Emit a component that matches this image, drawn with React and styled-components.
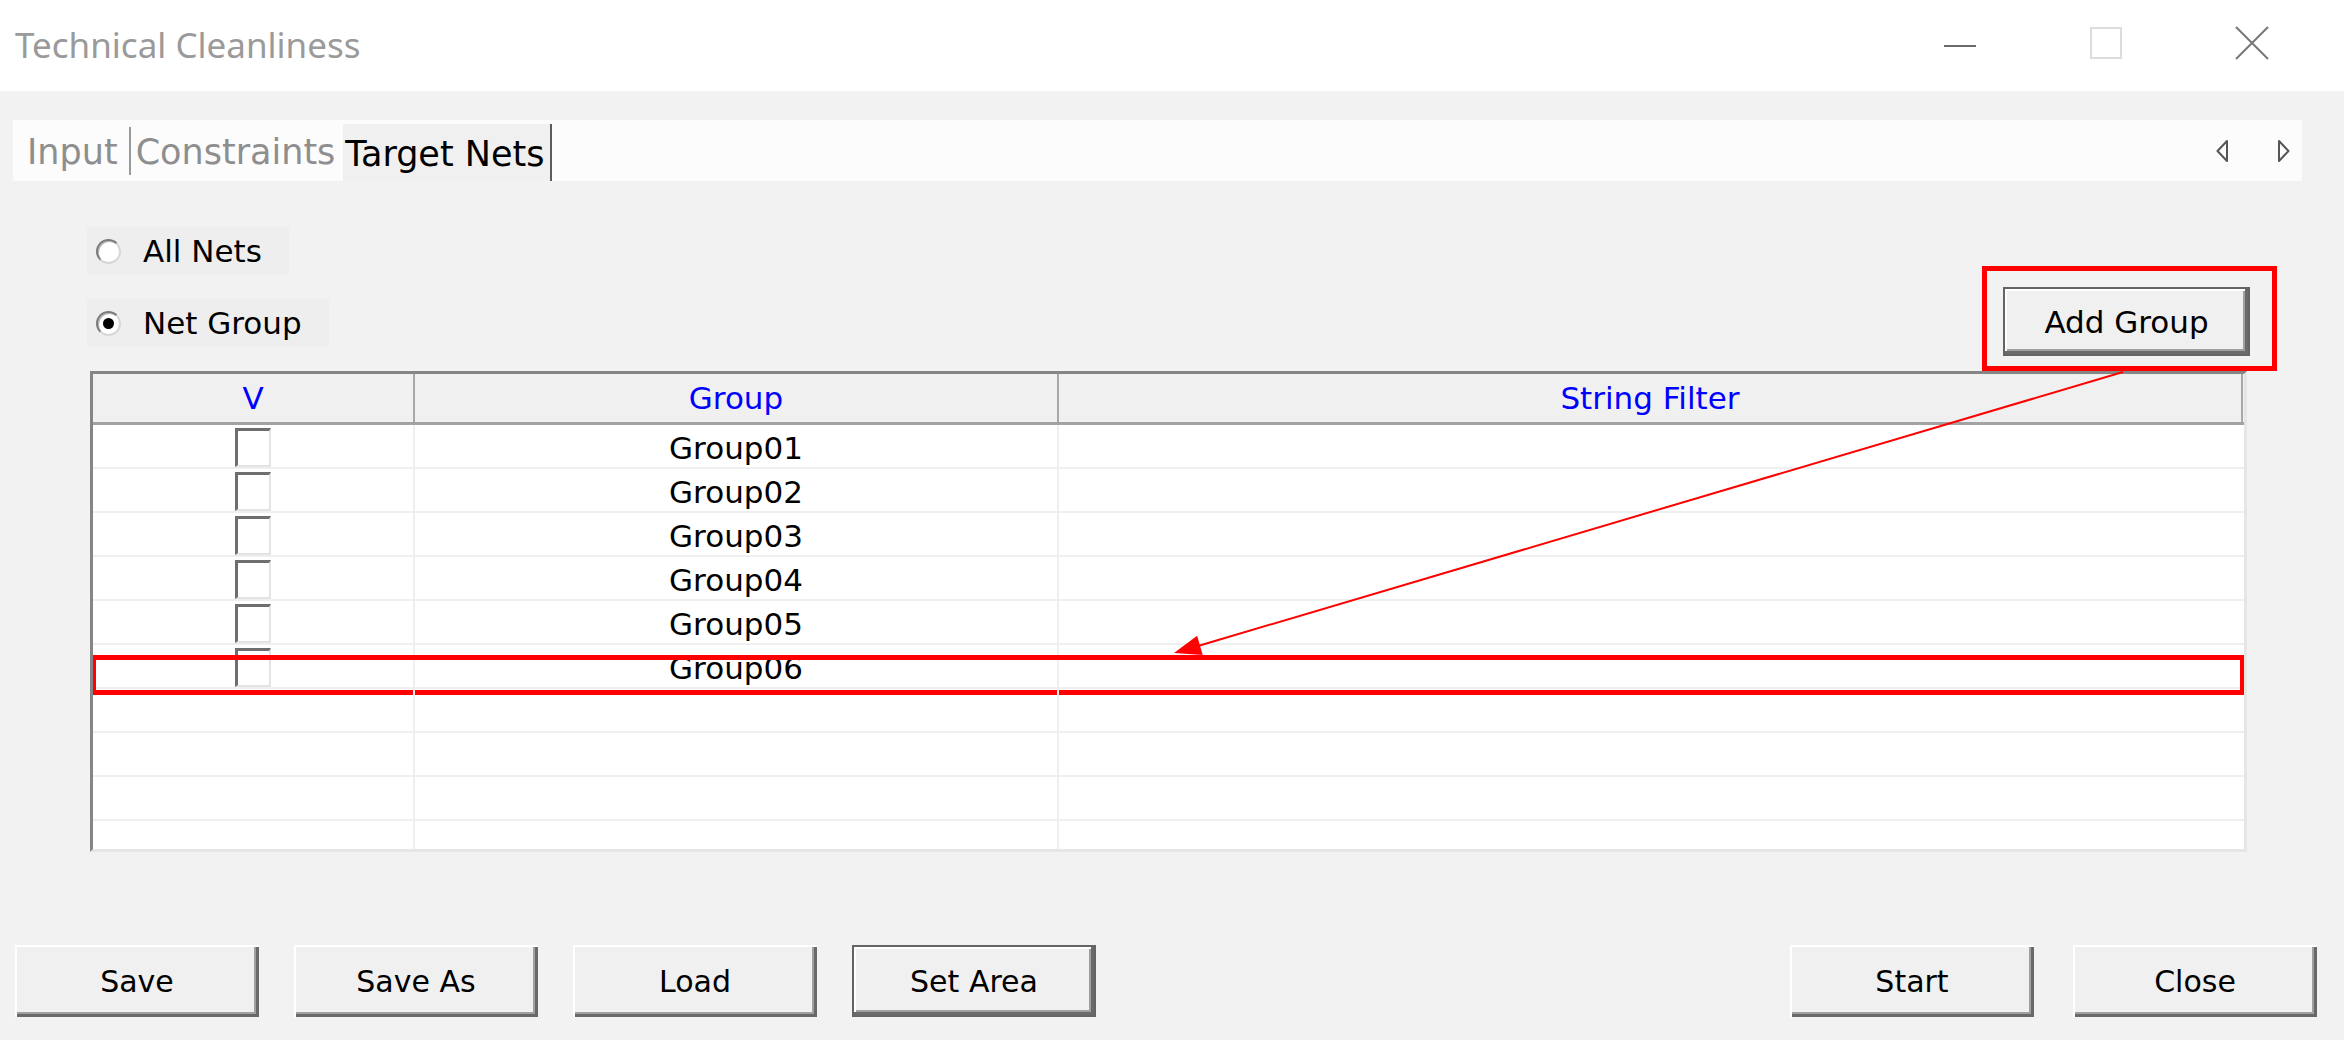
import React from 'react'
import styled, { createGlobalStyle, css } from 'styled-components'

const GlobalStyle = createGlobalStyle`
  html, body {
    margin: 0;
    padding: 0;
    background: #f2f2f2;
  }
  body {
    font-family: "DejaVu Sans", "Liberation Sans", sans-serif;
  }
  * {
    box-sizing: border-box;
  }
`;

const Window = styled.div`
  position: relative;
  width: 2344px;
  height: 1040px;
  display: flex;
  flex-direction: column;
  background: #f2f2f2;
  overflow: hidden;
`;

const TitleBar = styled.div`
  height: 91px;
  flex: none;
  display: flex;
  align-items: center;
  padding-left: 15px;
  background: #ffffff;
`;

const Title = styled.div`
  flex: 1;
  font-family: "Noto Sans", "Open Sans", sans-serif;
  font-size: 35px;
  color: #9a9a9a;
  margin-top: -2px;
`;

const Caption = styled.div`
  display: flex;
  align-self: stretch;
  padding-right: 19px;
`;

const CaptionButton = styled.div`
  width: 146px;
  display: flex;
  align-items: center;
  justify-content: center;
  padding-bottom: ${({ $pb }) => $pb ?? 5}px;
`;

const Body = styled.div`
  display: flex;
  flex-direction: column;
  padding: 29px 42px 0 13px;
`;

const TabStrip = styled.div`
  height: 61px;
  display: flex;
  align-items: stretch;
  background: #fcfcfc;
`;

const Tab = styled.div`
  display: flex;
  align-items: center;
  font-size: 35px;
  color: #8e8e8e;
  padding: ${({ $pad }) => $pad};
  ${({ $active }) => $active && css`
    align-self: flex-end;
    height: 57px;
    color: #000000;
    background: #f0f0f0;
  `}
`;

const TabDivider = styled.div`
  width: 2px;
  height: ${({ $h }) => $h}px;
  background: ${({ $c }) => $c};
  align-self: ${({ $self }) => $self || 'center'};
`;

const TabArrows = styled.div`
  margin-left: auto;
  display: flex;
  align-items: center;
  gap: 50px;
  padding-right: 12px;
`;

const Content = styled.div`
  display: flex;
  flex-direction: column;
  padding: 0 25px 0 74px;
`;

const OptionsRow = styled.div`
  margin-top: 46px;
  display: flex;
  justify-content: space-between;
  align-items: flex-end;
`;

const RadioColumn = styled.div`
  display: flex;
  flex-direction: column;
  align-items: flex-start;
  gap: 24px;
  margin-bottom: 24px;
`;

const RadioItem = styled.label`
  height: 48px;
  display: flex;
  align-items: center;
  gap: 22px;
  padding: 0 27px 0 9px;
  background: #eeeeee;
  font-size: 31px;
  color: #000000;
`;

const RadioCircle = styled.span`
  width: 25px;
  height: 25px;
  border-radius: 50%;
  display: flex;
  align-items: center;
  justify-content: center;
  background: #ffffff;
  border: 2px solid;
  border-color: #7a7a7a #d6d6d6 #d6d6d6 #7a7a7a;
  box-shadow: inset 1px 1px 0 #b5b5b5;
  ${({ $checked }) => $checked && css`
    &::after {
      content: '';
      width: 11px;
      height: 11px;
      border-radius: 50%;
      background: #000000;
    }
  `}
`;

const MarkFrame = styled.div`
  border: 5px solid #ff0000;
  padding: 16px 22px 10px 16px;
`;

const WinButton = styled.button`
  width: ${({ $w }) => $w || 244}px;
  height: ${({ $h }) => $h || 72}px;
  border: none;
  margin: 0;
  padding: 0;
  background: #f0f0f0;
  font-family: "DejaVu Sans", "Liberation Sans", sans-serif;
  font-size: ${({ $fs }) => $fs || 30}px;
  color: #000000;
  box-shadow: inset 2px 2px 0 #ffffff, inset -3px -3px 0 #696969, inset -5px -5px 0 #a0a0a0;
  ${({ $default }) => $default && css`
    box-shadow: inset 0 0 0 2px #646464, inset -5px -5px 0 #6a6a6a, inset 4px 4px 0 #ffffff, inset -7px -7px 0 #a0a0a0;
  `}
`;

const Table = styled.div`
  margin-left: 3px;
  width: 2157px;
  height: 481px;
  display: flex;
  flex-direction: column;
  overflow: hidden;
  background: #ffffff;
  border-style: solid;
  border-width: 3px;
  border-color: #858585 #e6e6e6 #e6e6e6 #858585;
`;

const HeaderRow = styled.div`
  flex: none;
  height: 51px;
  display: grid;
  grid-template-columns: 320px 644px 1186px;
  background: #f0f0f0;
  border-bottom: 3px solid #a3a3a3;
`;

const HeaderCell = styled.div`
  display: flex;
  align-items: center;
  justify-content: center;
  font-size: 31px;
  color: #0000ff;
  border-left: ${({ $first }) => ($first ? 'none' : '2px solid #a8a8a8')};
  border-right: ${({ $last }) => ($last ? '2px solid #a8a8a8' : 'none')};
`;

const Row = styled.div`
  position: relative;
  flex: none;
  height: 44px;
  display: grid;
  grid-template-columns: 320px 644px 1fr;
  border-bottom: 2px solid #efefef;
`;

const Cell = styled.div`
  display: flex;
  align-items: center;
  justify-content: center;
  padding-top: 3px;
  font-size: 31px;
  color: #000000;
  border-left: ${({ $first }) => ($first ? 'none' : '2px solid #efefef')};
`;

const CheckBox = styled.span`
  width: 36px;
  height: 39px;
  background: #ffffff;
  border-style: solid;
  border-width: 3px 2px 2px 3px;
  border-color: #6e6e6e #e3e3e3 #e3e3e3 #6e6e6e;
`;

const RowMark = styled.div`
  position: absolute;
  top: 10px;
  left: -2px;
  right: -1px;
  height: 40px;
  border: 5px solid #ff0000;
  pointer-events: none;
`;

const Footer = styled.div`
  margin-top: 93px;
  display: flex;
  justify-content: space-between;
  padding: 0 27px 0 15px;
`;

const ButtonGroup = styled.div`
  display: flex;
  gap: ${({ $gap }) => $gap}px;
`;

const Annotation = styled.svg`
  position: absolute;
  left: 0;
  top: 0;
  pointer-events: none;
`;

const groups = ['Group01', 'Group02', 'Group03', 'Group04', 'Group05', 'Group06', '', '', '', '']

const App = () => {
  return (
    <>
      <GlobalStyle />
      <Window>
        <TitleBar>
          <Title>Technical Cleanliness</Title>
          <Caption>
            <CaptionButton $pb={0}>
              <svg width="34" height="4" viewBox="0 0 34 4">
                <line x1="1" y1="2" x2="33" y2="2" stroke="#6b6b6b" strokeWidth="2" />
              </svg>
            </CaptionButton>
            <CaptionButton>
              <svg width="32" height="32" viewBox="0 0 32 32">
                <rect x="1" y="1" width="30" height="30" fill="none" stroke="#dcdcdc" strokeWidth="2" />
              </svg>
            </CaptionButton>
            <CaptionButton>
              <svg width="34" height="34" viewBox="0 0 34 34">
                <path d="M1 1 L33 33 M33 1 L1 33" stroke="#777777" strokeWidth="2" />
              </svg>
            </CaptionButton>
          </Caption>
        </TitleBar>

        <Body>
          <TabStrip>
            <Tab $pad="2px 11px 0 14px">Input</Tab>
            <TabDivider $h={48} $c="#9a9a9a" />
            <Tab $pad="2px 8px 0 5px">Constraints</Tab>
            <Tab $active $pad="2px 6px 0 2px">Target Nets</Tab>
            <TabDivider $h={57} $c="#5c5c5c" $self="flex-end" />
            <TabArrows>
              <svg width="12" height="22" viewBox="0 0 12 22">
                <path d="M11 1 L1.5 11 L11 21 Z" fill="none" stroke="#555555" strokeWidth="2" strokeLinejoin="round" />
              </svg>
              <svg width="12" height="22" viewBox="0 0 12 22">
                <path d="M1 1 L10.5 11 L1 21 Z" fill="none" stroke="#555555" strokeWidth="2" strokeLinejoin="round" />
              </svg>
            </TabArrows>
          </TabStrip>

          <Content>
            <OptionsRow>
              <RadioColumn>
                <RadioItem>
                  <RadioCircle />
                  All Nets
                </RadioItem>
                <RadioItem>
                  <RadioCircle $checked />
                  Net Group
                </RadioItem>
              </RadioColumn>
              <MarkFrame>
                <WinButton $default $w={247} $h={69} $fs={31}>Add Group</WinButton>
              </MarkFrame>
            </OptionsRow>

            <Table>
              <HeaderRow>
                <HeaderCell $first>V</HeaderCell>
                <HeaderCell>Group</HeaderCell>
                <HeaderCell $last>String Filter</HeaderCell>
              </HeaderRow>
              {groups.map((g, i) => (
                <Row key={i}>
                  <Cell $first>{g && <CheckBox />}</Cell>
                  <Cell>{g}</Cell>
                  <Cell />
                  {i === 5 && <RowMark />}
                </Row>
              ))}
            </Table>
          </Content>
        </Body>

        <Footer>
          <ButtonGroup $gap={35}>
            <WinButton>Save</WinButton>
            <WinButton>Save As</WinButton>
            <WinButton>Load</WinButton>
            <WinButton $default>Set Area</WinButton>
          </ButtonGroup>
          <ButtonGroup $gap={39}>
            <WinButton>Start</WinButton>
            <WinButton>Close</WinButton>
          </ButtonGroup>
        </Footer>

        {/* red annotation arrow from Add Group to the new row */}
        <Annotation width="2344" height="1040" viewBox="0 0 2344 1040">
          <line x1="2123" y1="372" x2="1198" y2="646" stroke="#ff0000" strokeWidth="2" />
          <polygon points="1174,653 1202.7,654.9 1197.1,635.7" fill="#ff0000" />
        </Annotation>
      </Window>
    </>
  )
}

export default App
